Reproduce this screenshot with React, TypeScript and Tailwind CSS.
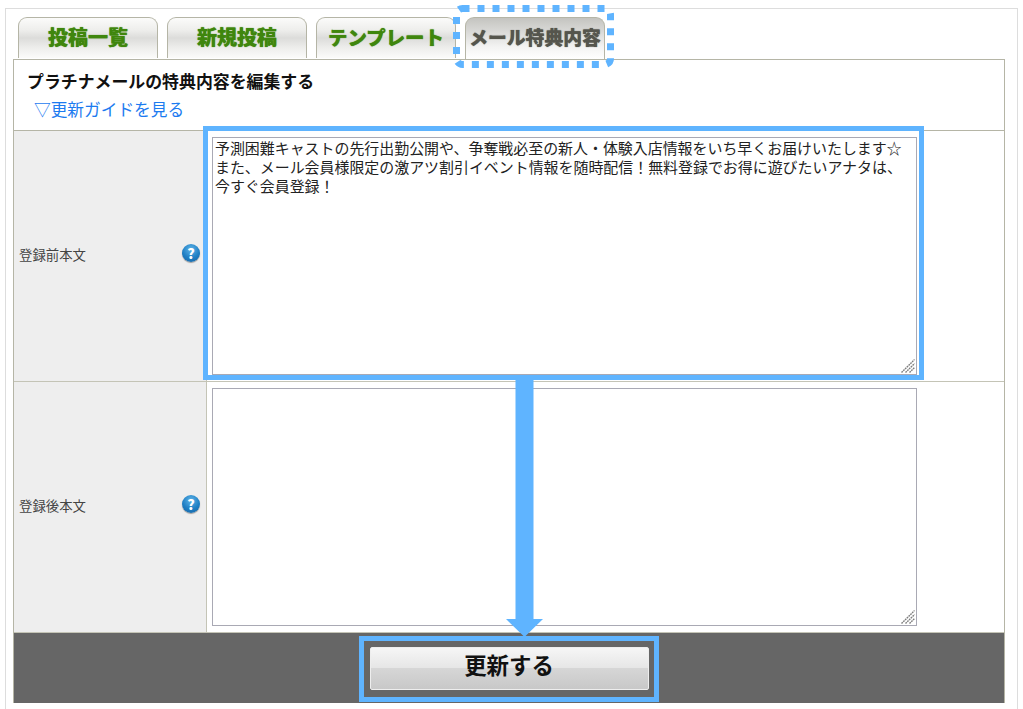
import React from "react";

const font = { fontFamily: '"Noto Sans CJK JP", "Noto Sans", sans-serif' };

function Tab({ label, active, size }: { label: string; active?: boolean; size: string }) {
  return (
    <div
      className={
        active
          ? "relative z-10 flex h-[42px] w-[140px] items-center justify-center rounded-t-[9px] border border-b-0 border-[#b5b5a6] bg-[linear-gradient(to_bottom,#c4c4c0_0%,#dededc_40%,#f3f3f2_70%,#ffffff_100%)] pb-[2px] font-black text-[#55554d]"
          : "flex h-[41px] w-[140px] items-center justify-center rounded-t-[9px] border border-b-0 border-[#b5b5a6] bg-[linear-gradient(to_bottom,#fbfbfa_0%,#eeeeec_30%,#dcdcda_50%,#eeeeec_75%,#fbfbfa_100%)] pb-[2px] font-black text-[#3f860d]"
      }
    >
      <span className={size + " leading-none [text-shadow:0_0_1px_currentColor]"}>{label}</span>
    </div>
  );
}

function Help() {
  return (
    <div className="mb-[3px] flex h-[18px] w-[18px] items-center justify-center rounded-full bg-[radial-gradient(circle_at_50%_30%,#5fb4e8_0%,#1f7fc4_55%,#14609f_100%)] text-[14px] leading-none font-black text-white shadow-[0_1px_1px_rgba(0,0,0,0.35)]">
      ?
    </div>
  );
}

function Grip() {
  return (
    <svg className="pointer-events-none absolute right-[2px] bottom-[2px]" width="14" height="14" viewBox="0 0 14 14" fill="none" stroke="#7d7d7d" strokeWidth="1.4" strokeDasharray="1.8 0.7">
      <path d="M0.5 13.5L13.5 0.5" />
      <path d="M4.5 13.5L13.5 4.5" />
      <path d="M8.5 13.5L13.5 8.5" />
    </svg>
  );
}

function Row({ label, value, cellClass, rowClass }: { label: string; value: string; cellClass: string; rowClass: string }) {
  return (
    <div className={"flex border-b border-[#c4c4b6] " + rowClass}>
      <div className="flex w-[193px] shrink-0 items-center justify-between border-r border-[#c4c4b6] bg-[#eeeeee] pr-[6px] pb-[3px] pl-[5px]">
        <span className="text-[13.4px] leading-none text-[#444444]">{label}</span>
        <Help />
      </div>
      <div className={"flex-1 pl-[5px] " + cellClass}>
        <div className="relative h-[238px] w-[705px]">
          <textarea
            readOnly
            defaultValue={value}
            className="block h-[238px] w-[705px] resize-none border border-[#a9a9b4] bg-white px-[2px] py-0 text-[14.95px] leading-[19px] text-[#222222] outline-none"
            style={font}
          />
          <Grip />
        </div>
      </div>
    </div>
  );
}

export default function App() {
  return (
    <div className="relative h-[709px] w-[1023px] overflow-hidden bg-white" style={font}>
      <div className="mt-2 ml-[5px] h-[720px] w-[1013px] border-x border-t border-[#dddddd] bg-white px-[7px] pt-2">
        <div className="flex gap-[9px] pl-[5px]">
          <Tab label="投稿一覧" size="text-[20px]" />
          <Tab label="新規投稿" size="text-[20px]" />
          <Tab label="テンプレート" size="text-[19.4px]" />
          <Tab label="メール特典内容" size="text-[18.8px]" active />
        </div>
        <div className="w-[992px] border border-b-0 border-[#b5b5a6]">
          <div className="h-[71px] border-b border-[#b5b5a6] pt-[10px] pl-[13px]">
            <div className="text-[16.9px] leading-[22px] font-bold text-[#111111]">プラチナメールの特典内容を編集する</div>
            <div className="mt-[6px] pl-[7px] text-[16.7px] leading-[22px] text-[#1c7bf0]">▽更新ガイドを見る</div>
          </div>
          <Row
            label="登録前本文"
            rowClass="h-[251px]"
            cellClass="pt-[6px]"
            value={"予測困難キャストの先行出勤公開や、争奪戦必至の新人・体験入店情報をいち早くお届けいたします☆\nまた、メール会員様限定の激アツ割引イベント情報を随時配信！無料登録でお得に遊びたいアナタは、\n今すぐ会員登録！"}
          />
          <Row label="登録後本文" rowClass="h-[251px]" cellClass="pt-[6px] bg-white" value="" />
          <div className="flex h-[70px] items-center justify-center bg-[#666666]">
            <div className="flex h-[43px] w-[279px] items-center justify-center rounded-[2px] border border-[#eeeeee] bg-[linear-gradient(to_bottom,#f6f6f6_0%,#e6e6e6_48%,#d6d6d6_50%,#c8c8c8_100%)] pb-[8px] text-[22.4px] leading-none font-bold text-[#111111]">
              更新する
            </div>
          </div>
        </div>
      </div>

      {/* annotations lying over the page */}
      <svg className="absolute top-[4px] left-[451px] z-20" width="165" height="66" viewBox="0 0 165 66" fill="none">
        <rect x="5.5" y="4.5" width="154" height="56" rx="6" stroke="#5fb4ff" strokeWidth="7" strokeDasharray="7 8" />
      </svg>
      <div className="absolute top-[126px] left-[203px] z-20 h-[254px] w-[721px] border-[5px] border-[#5fb4ff]" />
      <div className="absolute top-[636px] left-[359px] z-20 h-[66px] w-[300px] border-[5px] border-[#5fb4ff]" />
      <svg className="absolute top-[380px] left-[506px] z-20" width="38" height="257" viewBox="0 0 38 257">
        <path d="M9.5 0H27.5V239H37L18.5 257L0 239H9.5Z" fill="#5fb4ff" />
      </svg>
    </div>
  );
}
